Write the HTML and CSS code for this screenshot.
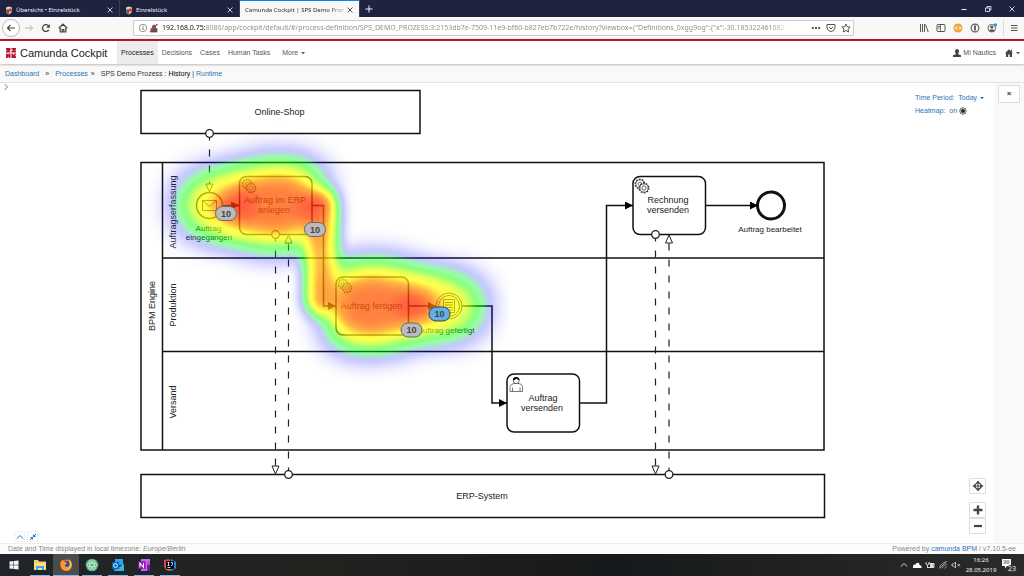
FILE: index.html
```html
<!DOCTYPE html>
<html lang="en">
<head>
<meta charset="utf-8">
<title>Camunda Cockpit | SPS Demo Prozess</title>
<link rel="stylesheet" href="styles.css">
</head>
<body>
<svg class="defs" aria-hidden="true">
  <defs>
    <symbol id="cross" viewBox="0 0 8 8"><path d="M1.500 1.500l5 5M6.500 1.500l-5 5" stroke="currentColor" stroke-width=".8" fill="none"/></symbol>
    <symbol id="shop" viewBox="0 0 10 10"><path d="M2 2.500l3-1 3 1-.5 5L5 9.500 2.500 8z" fill="#d8cfc8"/><path d="M2.500 4L5 5v4L2.500 7.500z" fill="#7a5142"/><circle cx="6" cy="5" r="1.800" fill="#d8432c"/><path d="M3.500 2l1.500 1.500" stroke="#efe9dd"/></symbol>
    <symbol id="caret" viewBox="0 0 6 4"><path d="M1 1h4L3 3.200z" fill="currentColor"/></symbol>
    <symbol id="gears" viewBox="0 0 16 16">
      <g fill="none" stroke="currentColor">
        <circle cx="6" cy="6" r="4.800" stroke-width="1.200" stroke-dasharray="1.600 1.400"/><circle cx="6" cy="6" r="4.100" stroke-width=".6"/><circle cx="6" cy="6" r="1.900" stroke-width=".6"/>
        <circle cx="10" cy="10" r="4.800" fill="#fff" stroke-width="1.200" stroke-dasharray="1.600 1.400"/><circle cx="10" cy="10" r="4.100" fill="#fff" stroke-width=".7"/><circle cx="10" cy="10" r="2.100" stroke-width=".7"/>
      </g>
    </symbol>
  </defs>
</svg>

<div class="tabs">
  <div class="tab"><svg class="i10"><use href="#shop"/></svg><span class="tab-title">Übersicht • Einzelstück</span><button class="plain" aria-label="Close tab"><svg class="i8"><use href="#cross"/></svg></button></div>
  <div class="tab"><svg class="i10"><use href="#shop"/></svg><span class="tab-title">Einzelstück</span><button class="plain" aria-label="Close tab"><svg class="i8"><use href="#cross"/></svg></button></div>
  <div class="tab active"><span class="tab-title">Camunda Cockpit | SPS Demo Proz</span><button class="plain" aria-label="Close tab"><svg class="i8"><use href="#cross"/></svg></button></div>
  <button class="plain new-tab" aria-label="New tab"><svg class="i8" viewBox="0 0 8 8"><path d="M4 .5v7M.5 4h7" stroke="currentColor"/></svg></button>
  <div class="window-buttons">
    <button class="plain" aria-label="Minimize"><svg class="i8" viewBox="0 0 8 8"><path d="M1.500 4.500h5" stroke="currentColor"/></svg></button>
    <button class="plain" aria-label="Restore"><svg class="i8" viewBox="0 0 8 8"><path d="M1.500 3h4v3.500h-4zM3 3V1.500h4V5H5.500" fill="none" stroke="currentColor" stroke-width=".8"/></svg></button>
    <button class="plain" aria-label="Close window"><svg class="i8"><use href="#cross"/></svg></button>
  </div>
</div>

<div class="toolbar">
  <div class="browser-nav">
    <button class="plain back" aria-label="Back"><svg class="i10" viewBox="0 0 10 10"><path d="M9 5H1.500M4.500 1.800L1.500 5l3 3.200" fill="none" stroke="#444" stroke-width="1.200"/></svg></button>
    <button class="plain" aria-label="Forward"><svg class="i10" viewBox="0 0 10 10"><path d="M1 5h7.500M5.500 1.800L8.500 5l-3 3.200" fill="none" stroke="#b5b5b5"/></svg></button>
    <button class="plain" aria-label="Reload"><svg class="i10" viewBox="0 0 10 10"><path d="M7.800 6.800A3.400 3.400 0 1 1 7.600 3" fill="none" stroke="#444" stroke-width="1.300"/><path d="M8.800 1v3.700H5.200z" fill="#444"/></svg></button>
    <button class="plain" aria-label="Home"><svg class="i10" viewBox="0 0 10 10"><path d="M.8 5.300L5 1.200l4.200 4.100M2.200 5v4h5.600V5M4.200 9V6.500h1.600V9" fill="none" stroke="#444" stroke-width="1.200"/></svg></button>
  </div>
  <div class="address">
    <svg class="i10" viewBox="0 0 10 10"><circle cx="5" cy="5" r="3.700" fill="none" stroke="#777" stroke-width=".8"/><path d="M5 4.500V7M5 2.800v1" stroke="#666"/></svg>
    <svg class="i10" viewBox="0 0 10 10"><path d="M2 5.500h6V9H2zM3.500 5.500V4q0-2 1.500-2t1.500 2v1.500" fill="#555" stroke="#555" stroke-width=".8"/><path d="M1 9L8.500 1" stroke="#e22850" stroke-width="1.200"/></svg>
    <input class="url" type="text" aria-label="Address" value='192.168.0.75:8080/app/cockpit/default/#/process-definition/SPS_DEMO_PROZESS:3:2153db7e-7509-11e9-bf60-b827eb7b722e/history?viewbox={"Definitions_0xgg9og":{"x":-30.185322461082'>
    <div class="address-actions">
      <button class="plain" aria-label="Page actions"><svg class="i10" viewBox="0 0 10 10"><path d="M.8 5h2M4 5h2M7.200 5h2" stroke="#555" stroke-width="1.800"/></svg></button>
      <button class="plain" aria-label="Save to Pocket"><svg class="i10" viewBox="0 0 10 10"><path d="M1 1.500h8V5Q8 8.500 5 8.500T1 5zM3 4l2 2 2-2" fill="none" stroke="#555"/></svg></button>
      <button class="plain" aria-label="Bookmark"><svg class="i10" viewBox="0 0 10 10"><path d="M5 1l1.200 2.700 2.900.3L7 6l.6 3L5 7.500 2.400 9 3 6 .9 4l2.900-.3z" fill="none" stroke="#555"/></svg></button>
    </div>
  </div>
  <div class="browser-tools">
    <button class="plain" aria-label="Library"><svg class="i10" viewBox="0 0 10 10"><path d="M1.500 1v8M3.500 1v8M5.500 1v8M6.500 1.500L9.200 9" stroke="#555" fill="none"/></svg></button>
    <button class="plain" aria-label="Sidebar"><svg class="i10" viewBox="0 0 10 10"><rect x="1" y="1.500" width="8" height="7" rx="1" fill="none" stroke="#555"/><path d="M4.500 2v6M2 3.500h2M2 5h2" stroke="#555" stroke-width=".8"/></svg></button>
    <button class="plain" aria-label="Extension"><svg class="i10" viewBox="0 0 10 10"><circle cx="5" cy="5" r="4.500" fill="#eda23a"/><path d="M4.500 4Q2 3.500 2 5t2.500 1M5.500 4Q8 3.500 8 5T5.500 6" fill="none" stroke="#fff3d0"/></svg></button>
    <button class="plain" aria-label="Password manager"><svg class="i10" viewBox="0 0 10 10"><circle cx="5" cy="5" r="3.900" fill="none" stroke="#555" stroke-width="1.100"/><path d="M5 2.500v5" stroke="#555" stroke-width="1.800"/></svg></button>
    <button class="plain" aria-label="Account"><svg class="i10" viewBox="0 0 10 10"><circle cx="4.800" cy="5.200" r="3.800" fill="none" stroke="#666"/><circle cx="4.800" cy="4" r="1.600" fill="#555"/><path d="M2 7.500Q5 5 7.500 7.500L5 9z" fill="#555"/><circle cx="8.500" cy="1.800" r="1.500" fill="#1b8cf0"/></svg></button>
    <button class="plain menu" aria-label="Menu"><svg class="i10" viewBox="0 0 10 10"><path d="M2 2.500h6.500M2 5h6.500M2 7.500h6.500" stroke="#555"/></svg></button>
  </div>
</div>

<header class="navbar">
  <a class="brand" href="#"><svg class="i12" viewBox="0 0 12 12"><path d="M1 1h4.500v2.200l-1 .8 1 1V5.500H1V4l1.200-.8L1 2.500zM6.500 1H11v1.500l-1 .8 1 .8v1.400H6.500zM1 6.500h4.500V11H4.200L3.300 9.800 2.500 11H1zM6.500 6.500H11V8L9.800 8.800 11 9.600V11H6.500z" fill="#b5152b"/><path d="M6 3.200h2M8.800 6v2M3.200 6v1.600" stroke="#fff" stroke-width=".9"/></svg>Camunda Cockpit</a>
  <nav class="sections">
    <a class="current" href="#">Processes</a><a href="#">Decisions</a><a href="#">Cases</a><a href="#">Human Tasks</a><button class="plain">More <svg class="caret"><use href="#caret"/></svg></button>
  </nav>
  <div class="account">
    <button class="plain"><svg class="i8" viewBox="0 0 8 8"><path d="M4 0q2 0 2 2.200Q6 4 5 4.800q0 .6 3 1.400V8H0V6.200q3-.8 3-1.400Q2 4 2 2.200 2 0 4 0z" fill="#444"/></svg>Mi Nautics</button>
    <button class="plain" aria-label="Apps"><svg class="i8" viewBox="0 0 8 8"><path d="M4 .3l4 4H7V8H4.800V5.500H3.200V8H1V4.300H0zM6 .8h1V3L6 2z" fill="#444"/></svg><svg class="caret"><use href="#caret"/></svg></button>
  </div>
</header>

<nav class="breadcrumbs" aria-label="Breadcrumb"><a href="#">Dashboard</a><b>»</b><a href="#">Processes</a><b class="near">»</b><span>SPS Demo Prozess : <strong>History</strong> | <a href="#">Runtime</a></span></nav>

<main class="content">
  <section class="diagram">
    <svg class="bpmn" viewBox="0 83 994 460">
      <defs>
        <marker id="arrow" viewBox="0 0 8 8" refX="8" refY="4" markerWidth="8" markerHeight="8" markerUnits="userSpaceOnUse" orient="auto"><path d="M0 0l8 4-8 4z"/></marker>
        <marker id="open" viewBox="-1 -1 10 10" refX="8" refY="4" markerWidth="10" markerHeight="10" markerUnits="userSpaceOnUse" orient="auto"><path d="M0 .5l8 3.500-8 3.500z" fill="#fff" stroke="#222"/></marker>
        <marker id="dot" viewBox="0 0 10 10" refX="5" refY="5" markerWidth="10" markerHeight="10" markerUnits="userSpaceOnUse"><circle cx="5" cy="5" r="3.800" fill="#fff" stroke="#222" stroke-width="1.300"/></marker>
        <filter id="soft" x="-60%" y="-60%" width="220%" height="220%"><feGaussianBlur stdDeviation="14"/></filter>
        <filter id="mid" x="-80%" y="-80%" width="260%" height="260%"><feGaussianBlur stdDeviation="7"/></filter>
        <filter id="fine" filterUnits="userSpaceOnUse" x="180" y="140" width="320" height="240"><feGaussianBlur stdDeviation="7"/></filter>
        <filter id="palette" filterUnits="userSpaceOnUse" x="100" y="90" width="450" height="350" color-interpolation-filters="sRGB">
          <feColorMatrix values="0 0 0 1 0  0 0 0 1 0  0 0 0 1 0  0 0 0 1 0"/>
          <feComponentTransfer>
            <feFuncR type="table" tableValues="0 0 0 0 0 0 0 0 0 0 0 .1 .35 .6 .8 .95 1 1 1 1 1"/>
            <feFuncG type="table" tableValues="0 0 0 0 0 .1 .4 .7 .9 1 1 1 1 1 1 1 1 .85 .6 .4 .12"/>
            <feFuncB type="table" tableValues="1 1 1 1 1 .95 .7 .4 .2 .1 0 0 0 0 0 0 0 0 0 0 0"/>
            <feFuncA type="table" tableValues="0 .05 .1 .15 .19 .23 .28 .33 .38 .42 .46 .5 .55 .6 .64 .68 .71 .73 .74 .75 .76"/>
          </feComponentTransfer>
        </filter>
      </defs>

      <g class="shape">
        <rect x="141" y="90.500" width="279" height="43"/>
        <rect x="141" y="162.500" width="683" height="287.500"/>
        <path d="M162.500 162.500V450M162.500 258H824M162.500 351.500H824"/>
        <rect x="141" y="474.500" width="683.500" height="43"/>
        <rect x="239.500" y="176.500" width="72.500" height="58" rx="7"/>
        <rect x="336" y="277" width="72.500" height="58" rx="7"/>
        <rect x="507" y="374" width="72.500" height="58" rx="7"/>
        <rect x="633" y="176.500" width="72.500" height="58" rx="7"/>
        <circle cx="209.500" cy="205.500" r="13"/>
        <circle cx="449" cy="306" r="13" class="thin"/><circle cx="449" cy="306" r="10.500" class="thin"/>
        <circle cx="771" cy="205.500" r="13.500" class="thick"/>
        <path class="thin" d="M202.500 200.500h14v10h-14zM202.500 200.500l7 6 7-6M443.500 299.500h11v13h-11zM445 302.500h8M445 305h8M445 307.500h8M445 310h8"/>
      </g>
      <g class="flow">
        <path d="M223 205.500H239"/><path d="M312 205.500H323.500V306H336"/><path d="M408.500 306H436"/>
        <path d="M462 306H492V403H507"/><path d="M579.500 403H606.500V205.500H633"/><path d="M705.500 205.500H758"/>
      </g>
      <g class="message">
        <path d="M209.500 133.500V192"/><path d="M275.500 234.500V474"/><path d="M288.500 474.500V235"/><path d="M655.500 234.500V474"/><path d="M669 474.500V235"/>
      </g>
      <g color="#222">
        <use href="#gears" x="241" y="178" width="16" height="16"/><use href="#gears" x="337" y="278" width="16" height="16"/><use href="#gears" x="634" y="178" width="16" height="16"/>
        <path d="M510 391.500v-5q1-2.500 4-3h5q3 .5 3.500 3v5zM512.500 391v-3.500M520 391v-3.500" fill="#fff" stroke="#555" stroke-width=".8"/>
        <circle cx="516.200" cy="380.500" r="3" fill="#fff" stroke="#333" stroke-width=".7"/><path d="M513 380.500q-.5-3.500 3-3.500 4 0 3.400 3.500-2-1-3-1.700-1.400 1.400-3.400 1.700z" fill="#111"/>
      </g>
      <g class="label">
        <text x="279.500" y="115">Online-Shop</text><text x="482" y="499">ERP-System</text>
        <text transform="translate(155 306) rotate(-90)">BPM Engine</text>
        <text transform="translate(176 212) rotate(-90)">Auftragserfassung</text>
        <text transform="translate(176 305) rotate(-90)">Produktion</text>
        <text transform="translate(176 402) rotate(-90)">Versand</text>
        <text x="275" y="203">Auftrag im ERP</text><text x="274" y="213">anlegen</text>
        <text x="371.500" y="309">Auftrag fertigen</text>
        <text x="543" y="401">Auftrag</text><text x="542" y="411">versenden</text>
        <text x="668" y="203">Rechnung</text><text x="668" y="213">versenden</text>
      </g>
      <g class="label small">
        <text x="208.500" y="231">Auftrag</text><text x="209" y="240">eingegangen</text>
        <text x="446" y="333">Auftrag gefertigt</text><text x="770" y="232">Auftrag bearbeitet</text>
      </g>

      <g filter="url(#palette)">
        <path d="M216 177L240 164Q276 152 312 162L326 180V230L312 246Q276 258 240 246L216 234z" filter="url(#soft)" opacity=".92"/>
        <ellipse cx="211" cy="205" rx="37" ry="35" filter="url(#soft)" opacity=".78"/>
        <path d="M234 190L276 178 312 190V220L276 232 234 220z" filter="url(#mid)" opacity=".5"/>
        <path d="M321 205V300" fill="none" stroke="#000" stroke-width="34" stroke-linecap="round" filter="url(#fine)" opacity=".87"/>
        <path d="M324 275L336 264Q372 253 408 263L440 277V333L408 346Q372 359 336 348L324 330z" filter="url(#soft)" opacity=".92"/>
        <path d="M332 292L372 279 412 292V320L372 333 332 320z" filter="url(#mid)" opacity=".5"/>
        <ellipse cx="449" cy="306" rx="38" ry="35" filter="url(#soft)" opacity=".78"/>
        <path d="M228 206H242M308 207H316M408 306H422" fill="none" stroke="#000" stroke-width="22" stroke-linecap="round" filter="url(#fine)" opacity=".88"/>
      </g>

      <g class="badge">
        <rect x="215.500" y="206.500" width="21" height="14" rx="7"/><text x="226" y="217">10</text>
        <rect x="304.500" y="222.500" width="21" height="14" rx="7"/><text x="315" y="233">10</text>
        <rect x="401" y="323" width="21" height="14" rx="7"/><text x="411.500" y="333">10</text>
        <rect class="blue" x="429" y="307" width="21" height="14" rx="7"/><text x="439.500" y="317">10</text>
      </g>
    </svg>

    <button class="plain expand-left" aria-label="Expand sidebar"><svg class="i8" viewBox="0 0 8 8"><path d="M2.500 1l3 3-3 3" fill="none" stroke="currentColor"/></svg></button>
    <div class="options">
      <button class="plain">Time Period: &nbsp;Today <svg class="caret"><use href="#caret"/></svg></button>
      <button class="plain">Heatmap: &nbsp;on <svg class="i8" viewBox="0 0 8 8"><circle cx="4" cy="4" r="3.200" fill="none" stroke="#333" stroke-width=".8"/><circle cx="4" cy="4" r="2" fill="#222"/></svg></button>
    </div>
    <div class="zoom">
      <button class="box" aria-label="Reset zoom"><svg class="i12" viewBox="0 0 12 12"><circle cx="6" cy="6" r="3" fill="none" stroke="#444" stroke-width="1.200"/><path d="M6 .5L7.800 3H4.200zM6 11.500L4.200 9h3.600zM.5 6L3 4.200v3.600zM11.500 6L9 7.800V4.200zM5.500 3h1v6h-1zM3 5.500h6v1H3z" fill="#444"/></svg></button>
      <div class="pair">
        <button class="box" aria-label="Zoom in"><svg class="i12" viewBox="0 0 12 12"><path d="M6 1.500v9M1.500 6h9" stroke="#444" stroke-width="2.400"/></svg></button>
        <button class="box" aria-label="Zoom out"><svg class="i12" viewBox="0 0 12 12"><path d="M2 6h8" stroke="#444" stroke-width="2.200"/></svg></button>
      </div>
    </div>
    <div class="panel-buttons">
      <button class="box faint" aria-label="Expand panel"><svg class="i8" viewBox="0 0 8 8"><path d="M1 5.500l3-3 3 3" fill="none" stroke="currentColor"/></svg></button>
      <button class="box faint" aria-label="Maximize panel"><svg class="i8" viewBox="0 0 8 8"><path d="M1 7l6-6M4.500 1.500v2h2M1.500 4.500h2v2" fill="none" stroke="currentColor"/></svg></button>
    </div>
  </section>
  <aside class="side"><button class="box close" aria-label="Close">×</button></aside>
</main>

<footer class="footer"><span>Date and Time displayed in local timezone: <i>Europe/Berlin</i></span><span>Powered by <a href="#">camunda BPM</a> / v7.10.5-ee</span></footer>

<div class="taskbar">
  <button class="plain app" aria-label="Start"><svg class="i10" viewBox="0 0 10 10"><path d="M.5 1.500L4.500 1v3.700h-4zM5 1l4.500-.6v4.300H5zM.5 5.200h4V9l-4-.5zM5 5.200h4.500v4.300L5 9z" fill="#f5f5f5"/></svg></button>
  <button class="plain app open" aria-label="Explorer"><svg class="i14" viewBox="0 0 14 14"><path d="M1 2h4l1 1.500h7V12H1z" fill="#f5cf62"/><path d="M1 5h12v7H1z" fill="#fbe08a"/><path d="M3 12V8h8v4H9v-2H5v2z" fill="#42a5e0"/></svg></button>
  <button class="plain app open front" aria-label="Firefox"><svg class="i14" viewBox="0 0 14 14"><circle cx="7" cy="7.200" r="5.800" fill="#f5692c"/><circle cx="7.500" cy="6.500" r="3.600" fill="#2356b8"/><path d="M1.500 5Q2 3 3.500 1.500 4 3.500 6 4l2 1-1.500 1.500Q5 8.500 8 9q3 0 3.500-3Q11 3 8.500 1q4.500 1 4.500 6-.5 5.500-6 6-5-.5-5.500-8z" fill="#ff9a27"/><path d="M10 2q3 3 1.500 7-1 2-3 2.500Q12 8 10 2z" fill="#ffd83a"/></svg></button>
  <button class="plain app open" aria-label="Atom"><svg class="i14" viewBox="0 0 14 14"><circle cx="7" cy="7" r="6.300" fill="#5fb57d"/><g fill="none" stroke="#d4f2df" stroke-width=".7"><ellipse cx="7" cy="7" rx="5" ry="2"/><ellipse cx="7" cy="7" rx="5" ry="2" transform="rotate(60 7 7)"/><ellipse cx="7" cy="7" rx="5" ry="2" transform="rotate(120 7 7)"/></g></svg></button>
  <button class="plain app open" aria-label="Outlook"><svg class="i14" viewBox="0 0 14 14"><path d="M4 1h8v6H4z" fill="#28a8ea"/><path d="M3 6l5 3 5-3v7H3z" fill="#1490df"/><path d="M3 13l10-7v7z" fill="#35b5ee"/><rect x="1" y="4" width="7" height="7" fill="#0364b8"/><circle cx="4.500" cy="7.500" r="1.900" fill="none" stroke="#fff"/></svg></button>
  <button class="plain app open" aria-label="OneNote"><svg class="i14" viewBox="0 0 14 14"><path d="M4 1h9v12H4z" fill="#ca64ea"/><path d="M10 4h3v3h-3z" fill="#ae4bd5"/><path d="M10 7h3v6h-3z" fill="#7719aa"/><rect x="1" y="3.500" width="7.500" height="7.500" fill="#7719aa"/><path d="M3 9.500V5l3.500 4.500V5" fill="none" stroke="#fff" stroke-width="1.100"/></svg></button>
  <button class="plain app open" aria-label="IntelliJ IDEA"><svg class="i14" viewBox="0 0 14 14"><path d="M1 2l5-1 3 5-5 5-3-3z" fill="#e0405e"/><path d="M8 1l5 3v6l-4 3-3-3z" fill="#2587e0"/><path d="M1 8l5 1 2 4-5-1z" fill="#e97640"/><rect x="3" y="3" width="8" height="8" fill="#08080c"/><path d="M4.500 4.500h2M5.500 4.500v3M4.500 7.500h2M8 4.500h1.500v2q0 1-1.500 1M4.500 9.500h3" fill="none" stroke="#fff" stroke-width=".8"/></svg></button>
  <div class="tray">
    <svg class="i10" viewBox="0 0 10 10"><path d="M2 6.500l3-3 3 3" fill="none" stroke="#ddd"/></svg>
    <svg class="i10" viewBox="0 0 10 10"><path d="M1 8V6l1-1.500h1.500Q4.500 2 7 3l.5 2L9.500 6v2z" fill="#fff"/></svg>
    <svg class="i10" viewBox="0 0 10 10"><path d="M4 3.500h5v4H3" fill="none" stroke="#ddd"/><path d="M5 4h3.500v3H5z" fill="#ddd"/><path d="M1 2v2q1.500 2 3 0V2M2.500 5v3" fill="none" stroke="#ddd"/></svg>
    <svg class="i10" viewBox="0 0 10 10"><path d="M1.500 8.500Q2 3 9 1.500M4 8.500Q4.500 5 9 4M6.500 8.500Q7 7 9 6.500M2 8L8 2" fill="none" stroke="#aaa" stroke-width=".8"/></svg>
    <svg class="i10" viewBox="0 0 10 10"><path d="M1 4h1.500L4.500 2v6l-2-2H1zM6.500 4l2.500 2.500M9 4L6.500 6.500" fill="none" stroke="#ddd" stroke-width=".8"/></svg>
    <div class="clock"><span>16:26</span><span>28.05.2019</span></div>
    <button class="plain notes" aria-label="Notifications, 23 new"><svg class="i12" viewBox="0 0 12 12"><path d="M1 1h9v7H6L4 10.500V8H1z" fill="#fff"/><path d="M2.500 3h6M2.500 5h6" stroke="#333" stroke-width=".8"/></svg><span class="count">23</span></button>
  </div>
</div>
</body>
</html>
```

FILE: styles.css
```css
* { box-sizing: border-box; }

body {
  margin: 0;
  height: 100vh;
  display: flex;
  flex-direction: column;
  overflow: hidden;
  background: #fff;
  color: #333;
  font: 7px/10px "Liberation Sans", Arial, sans-serif;
}

a { color: #2a74b8; text-decoration: none; }
svg { display: block; flex: none; }
.defs { position: absolute; width: 0; height: 0; }
.i8 { width: 8px; height: 8px; }
.i10 { width: 10px; height: 10px; }
.i12 { width: 12px; height: 12px; }
.i14 { width: 14px; height: 14px; }
.caret { width: 6px; height: 4px; }

.plain {
  display: flex;
  align-items: center;
  justify-content: center;
  padding: 0;
  border: 0;
  background: none;
  color: inherit;
  font: inherit;
  white-space: pre;
}

/* Browser tabs */
.tabs {
  display: flex;
  height: 17px;
  flex: none;
  background: #20233f;
  color: #f2f2f5;
  font-family: "Noto Sans", sans-serif;
  font-size: 6px;
}
.tab {
  display: flex;
  align-items: center;
  gap: 2px;
  width: 120px;
  padding: 2px 5px 0 4px;
  border-right: 1px solid #3c3f58;
}
.tab-title { flex: 1; white-space: nowrap; }
.tab.active {
  padding-left: 5px;
  padding-top: 1px;
  border-top: 1px solid #0a84ff;
  background: #f8f8f9;
  color: #222;
}
.tab.active .tab-title {
  background: linear-gradient(90deg, #222 82%, #bbb);
  -webkit-background-clip: text;
  background-clip: text;
  color: transparent;
}
.new-tab { width: 17px; }
.window-buttons { display: flex; gap: 16px; margin-left: auto; padding-right: 8px; }

/* Browser toolbar */
.toolbar {
  display: flex;
  align-items: center;
  height: 22px;
  flex: none;
  padding: 0 5px 0 2px;
  background: #f8f8f9;
}
.browser-nav { display: flex; align-items: center; gap: 7px; width: 131px; }
.back {
  width: 18px;
  height: 18px;
  margin-right: -3px;
  border: 1px solid #bbb;
  border-radius: 50%;
  background: #fff;
}
.address {
  display: flex;
  flex: 1;
  align-items: center;
  gap: 1px;
  height: 16px;
  padding: 0 2px 0 4px;
  border: 1px solid #ccc;
  border-radius: 1px;
  background: #fff;
}
.url {
  flex: 1;
  min-width: 0;
  height: 14px;
  margin-left: 2px;
  padding: 0;
  border: 0;
  outline: 0;
  background: linear-gradient(90deg, #111 43px, #8a8a8a 43px, #8a8a8a 97%, transparent);
  -webkit-background-clip: text;
  background-clip: text;
  color: transparent;
  font: 7px/14px "Noto Sans", sans-serif;
}
.address-actions { display: flex; gap: 5px; margin-left: 20px; }
.browser-tools { display: flex; gap: 7px; margin-left: 65px; }
.menu { height: 16px; margin-left: -1px; padding-left: 5px; border-left: 1px solid #ddd; }
.browser-tools .plain { align-self: center; }

/* Application header */
.navbar {
  position: relative;
  display: flex;
  height: 25px;
  flex: none;
  border-top: 2px solid #b5152b;
  background: #fff;
  box-shadow: 0 1px 2px #bbb;
  color: #555;
}
.brand {
  display: flex;
  align-items: center;
  gap: 3px;
  width: 117px;
  padding-left: 5px;
  color: #222;
  font-size: 11px;
  white-space: nowrap;
}
.sections { display: flex; gap: 8px; }
.sections a { display: flex; align-items: center; color: #555; }
.sections .current { margin-right: -4px; padding: 0 4px; background: #ececec; color: #222; }
.sections .plain { margin-left: 4px; }
.account { display: flex; gap: 9px; margin-left: auto; padding-right: 3px; }
.account .plain { gap: 2px; }

.breadcrumbs {
  display: flex;
  align-items: center;
  gap: 6px;
  height: 19px;
  flex: none;
  padding: 1px 5px 0;
  border-bottom: 1px solid #e4e4e4;
  background: #f9f9f9;
}
.breadcrumbs strong { font-weight: normal; color: #000; }
.breadcrumbs b { font-weight: normal; }
.breadcrumbs .near { margin-left: -3px; }

/* Diagram */
.content { display: flex; flex: 1; min-height: 0; }
.diagram { position: relative; flex: 1; min-width: 0; }
.bpmn { width: 100%; height: 100%; }
.shape { fill: #fff; stroke: #111; stroke-width: 1.500; }
.shape path { fill: none; }
.shape .thin { stroke-width: 1; }
.shape .thick { stroke-width: 3; }
.flow { fill: none; stroke: #111; stroke-width: 1.500; }
.flow path { marker-end: url(#arrow); }
.message { fill: none; stroke: #222; stroke-width: 1.200; stroke-dasharray: 7 9; }
.message path { marker-start: url(#dot); marker-end: url(#open); }
.label { fill: #222; font-size: 9px; text-anchor: middle; }
.label.small { font-size: 8px; }
.badge { fill: #bbb; stroke: #666; font-size: 9px; font-weight: bold; text-anchor: middle; }
.badge .blue { fill: #62b0e4; stroke: #345; }
.badge text { fill: #444; stroke: none; }

.expand-left { position: absolute; left: 2px; top: 0; color: #4a86c5; }
.options {
  position: absolute;
  right: 9px;
  top: 8px;
  display: flex;
  flex-direction: column;
  align-items: flex-start;
  color: #2a74b8;
  line-height: 13px;
}
.zoom { position: absolute; right: 8px; bottom: 9px; display: flex; flex-direction: column; gap: 8px; }
.box {
  display: flex;
  align-items: center;
  justify-content: center;
  width: 17px;
  height: 16px;
  padding: 0;
  border: 1px solid #ddd;
  border-radius: 1px;
  background: #fff;
  color: #333;
}
.panel-buttons { position: absolute; left: 14px; bottom: 1px; display: flex; gap: 2px; }
.faint { width: 11px; height: 11px; border-color: #f0f0f0; color: #2a74b8; }
.side { width: 30px; padding: 2px 4px; background: #f9f9f9; }
.close { width: 22px; height: 18px; font: bold 8px/10px "Liberation Sans", Arial, sans-serif; }

.footer {
  display: flex;
  align-items: center;
  justify-content: space-between;
  height: 11px;
  flex: none;
  padding: 0 8px;
  border-top: 1px solid #eee;
  background: #fcfcfc;
  color: #888;
}

/* Desktop taskbar */
.taskbar { display: flex; height: 22px; flex: none; padding-left: 1px; background: linear-gradient(90deg, #20242a, #24221f 30%, #16191b 60%, #2b2b2b); color: #eee; }
.app { width: 26px; }
.app.open { background: linear-gradient(#76b9ed, #76b9ed) center bottom / 20px 1px no-repeat; }
.app.front { background: linear-gradient(#76b9ed, #76b9ed) center bottom / 26px 1px no-repeat, #4c4c4f; }
.tray { display: flex; align-items: center; gap: 3px; margin-left: auto; padding-right: 7px; font-family: "Noto Sans", sans-serif; font-size: 6px; }
.clock { display: flex; flex-direction: column; align-items: center; width: 34px; }
.notes { position: relative; width: 16px; height: 14px; align-items: flex-start; justify-content: flex-start; }
.count {
  position: absolute;
  right: 0;
  bottom: -1px;
  width: 10px;
  height: 8px;
  border-radius: 4px;
  background: #333;
  font-size: 7px;
  line-height: 8px;
}
```
